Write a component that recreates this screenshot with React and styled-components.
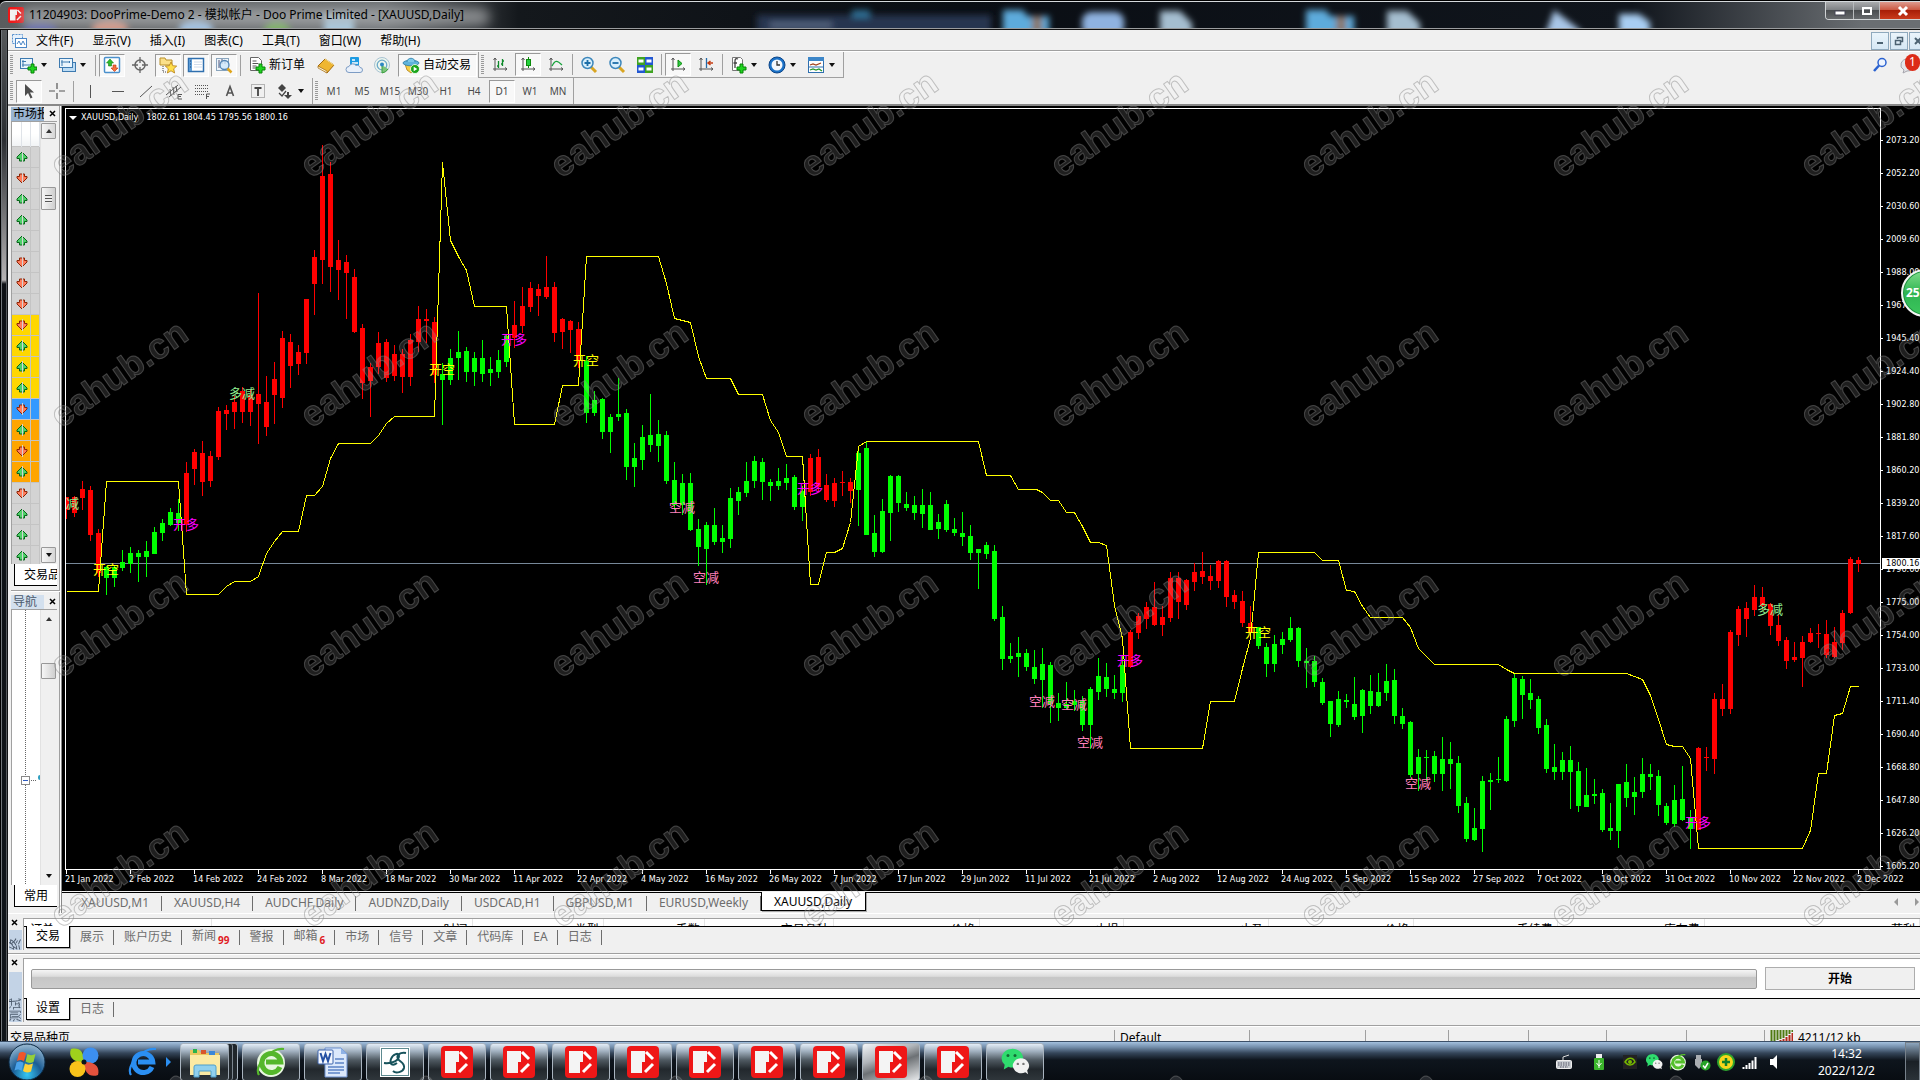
import React from 'react';
import styled, { createGlobalStyle, css } from 'styled-components';

const UI_FONT = '"Noto Sans", "Noto Sans CJK SC", sans-serif';
const AXIS_FONT = '"DejaVu Sans Condensed", "Noto Sans", sans-serif';

/* ---------- data ---------- */

// plot origin, every chart coordinate below is counted from the window corner
const LEFT = 66;
const TOP = 109;
const STEP = 8;

// [high, body top, body bottom, low]
const RUNS = [
    { color: '#ff0000', bars: [
        [497,497,510,519],[496,497,513,517],[481,489,498,510],[486,490,535,541],[529,533,573,577],
    ] },
    { color: '#00ff00', bars: [
        [566,567,578,595],[566,567,578,587],[550,562,568,571],[547,553,564,573],[550,553,557,582],
        [541,551,557,577],[527,532,554,554],[519,523,533,541],[508,512,525,526],[499,513,523,531],
    ] },
    { color: '#ff0000', bars: [
        [462,473,524,532],[449,452,469,485],[441,453,482,496],[451,456,481,487],[407,411,457,460],
        [405,410,414,430],[396,402,412,429],[387,391,412,423],[390,395,412,426],[293,394,404,444],
        [376,402,427,436],[362,379,395,424],[331,338,398,408],[334,342,366,388],[345,352,364,375],
        [299,299,353,364],[250,257,284,315],[145,176,260,284],[162,174,267,292],[240,260,270,300],
        [255,262,273,319],[269,277,332,333],[324,328,383,399],[363,367,381,417],[332,343,367,374],
        [339,342,378,382],[345,354,376,381],[349,354,377,393],[334,340,377,386],[306,319,342,352],
        [309,319,321,343],[317,322,375,383],
    ] },
    { color: '#00ff00', bars: [
        [363,374,380,425],[349,358,380,385],[331,352,358,380],[347,351,372,382],[352,358,372,386],
        [340,358,374,382],[357,369,373,386],[350,360,372,378],[334,336,362,367],
    ] },
    { color: '#ff0000', bars: [
        [301,325,338,348],[287,306,326,333],[282,288,307,312],[284,289,296,316],[256,287,297,299],
        [282,287,333,342],[318,319,332,349],[320,321,330,353],[322,329,360,368],
    ] },
    { color: '#00ff00', bars: [
        [356,361,413,423],[391,400,413,416],[398,399,432,439],[414,417,432,453],[378,414,417,421],
        [409,413,467,480],[443,458,467,487],[425,437,460,470],[394,435,445,452],[420,434,446,462],
        [431,435,481,484],[462,480,505,510],[474,483,505,515],[473,483,530,531],[519,529,547,566],
        [522,525,549,585],[508,525,542,545],[525,538,542,553],[488,498,539,548],[487,492,501,515],
        [462,481,493,497],[456,461,481,488],[458,462,482,500],[479,482,486,501],[468,481,486,490],
        [464,478,483,490],[475,477,507,510],[486,491,507,521],
    ] },
    { color: '#ff0000', bars: [
        [454,458,492,496],[449,457,487,492],[474,485,500,502],[478,483,501,507],[471,482,483,496],
        [478,482,491,503],
    ] },
    { color: '#00ff00', bars: [
        [451,453,490,526],[442,448,535,535],[515,533,552,557],[499,511,552,553],[475,476,513,541],
        [475,476,503,512],[492,504,508,511],[496,505,513,520],[489,505,514,528],[492,505,530,530],
        [514,522,529,539],[500,504,530,532],[518,529,533,536],[512,533,537,546],[525,536,553,560],
        [549,549,553,589],[542,545,554,559],[545,551,619,621],[606,617,659,670],[643,656,659,663],
        [637,653,657,677],[649,653,667,671],[650,667,679,684],[648,664,680,708],[662,665,704,723],
        [693,703,708,721],[682,704,708,709],[690,701,705,711],[696,701,725,731],[687,689,725,749],
        [658,676,692,700],[663,677,689,697],[675,689,693,699],[656,665,693,702],
    ] },
    { color: '#ff0000', bars: [
        [630,632,667,668],[613,616,633,639],[602,607,619,629],[582,607,625,626],[606,617,625,636],
        [572,578,618,622],[572,578,602,619],[579,580,605,610],[563,572,582,591],[552,571,577,584],
        [565,576,581,590],[560,561,581,588],[560,561,597,607],[590,595,602,609],[591,601,623,627],
        [606,623,633,637],
    ] },
    { color: '#00ff00', bars: [
        [627,627,646,649],[643,647,664,677],[635,644,664,672],[632,639,645,654],[617,628,640,642],
        [627,628,661,667],[648,661,663,688],[656,661,682,687],[678,682,703,705],[701,701,724,737],
        [691,699,725,727],[694,700,702,708],[677,704,717,720],[689,690,716,733],[675,691,706,714],
        [673,692,706,707],[664,681,693,701],[669,680,716,724],[708,716,724,729],[721,722,775,777],
        [749,757,774,791],[750,757,758,781],[751,756,774,782],[737,759,774,791],[742,759,764,789],
        [756,763,806,813],[797,803,839,842],[808,828,840,841],[776,781,829,852],[773,780,782,810],
        [757,779,780,783],[716,719,781,782],[674,678,721,727],[676,679,695,719],[679,693,700,709],
        [696,699,728,734],[719,725,769,773],[744,767,772,780],[752,760,772,780],[746,760,772,809],
        [762,771,806,812],[768,795,807,807],[779,794,796,804],[789,793,830,832],[803,828,831,840],
        [784,784,831,848],[764,782,798,807],[777,792,797,815],[758,774,792,798],[764,774,777,790],
        [770,776,805,816],[803,806,823,825],[785,800,824,827],[766,799,820,821],[810,817,829,849],
    ] },
    { color: '#ff0000', bars: [
        [747,748,830,830],[747,757,758,771],[693,699,759,774],[684,699,709,716],[630,632,709,714],
        [606,609,635,646],[602,608,619,637],[585,597,610,616],[587,597,606,610],[603,604,626,635],
        [614,625,641,646],[637,640,661,669],[642,657,660,662],[636,642,658,687],[628,633,642,643],
        [624,633,634,648],[620,634,655,658],[627,642,657,658],[610,613,643,650],[557,559,613,614],
        [557,560,564,572],
    ] },
];
const CANDLES = RUNS.flatMap(({ color, bars }) => bars.map((bar) => ({ color, bar })));

const STOP_LINE =
    '66,591 98,591 106,481 178,481 186,594 218,594 226,586 234,581 250,581 258,576 266,553 274,541 ' +
    '282,531 298,531 306,495 314,495 322,486 330,458 338,443 370,443 378,435 386,423 394,416 434,416 ' +
    '442,162 450,240 458,256 466,270 474,306 506,306 514,424 554,424 562,385 578,385 586,256 658,256 ' +
    '666,283 674,318 690,322 698,356 706,378 730,378 738,394 762,394 770,420 778,432 786,456 802,456 ' +
    '810,584 818,584 826,552 834,552 842,548 850,522 858,446 866,441 978,441 986,475 1010,475 1018,489 ' +
    '1036,489 1042,492 1050,500 1058,500 1066,512 1074,512 1082,526 1090,542 1098,542 1106,545 1114,605 ' +
    '1122,638 1130,748 1202,748 1210,701 1234,701 1242,668 1250,638 1258,552 1314,552 1322,560 1338,560 ' +
    '1346,590 1354,591 1362,606 1370,617 1402,617 1410,627 1418,648 1434,664 1498,664 1506,669 1514,673 ' +
    '1626,673 1642,679 1650,695 1658,719 1666,744 1674,746 1682,746 1690,758 1698,848 1802,848 1810,830 ' +
    '1818,773 1826,773 1834,715 1842,713 1850,686 1858,686';

const SIGNAL = { 开空: '#ffff00', 开多: '#ff00ff', 空减: '#ff80bb', 多减: '#90ee90' };
const SIGNALS = [
    ['多减', 53, 504], ['开空', 93, 570], ['开多', 173, 525], ['多减', 229, 394], ['开空', 429, 370],
    ['开多', 501, 340], ['开空', 573, 361], ['空减', 669, 508], ['空减', 693, 578], ['开多', 797, 489],
    ['空减', 1029, 702], ['空减', 1061, 705], ['空减', 1077, 743], ['开多', 1117, 661], ['开空', 1245, 633],
    ['空减', 1405, 784], ['多减', 1757, 610], ['开多', 1685, 823],
];

const PRICES = [
    '2073.20', '2052.20', '2030.60', '2009.60', '1988.00', '1967.00', '1945.40', '1924.40', '1902.80',
    '1881.80', '1860.20', '1839.20', '1817.60', '1796.60', '1775.00', '1754.00', '1733.00', '1711.40',
    '1690.40', '1668.80', '1647.80', '1626.20', '1605.20',
];
const DATES = [
    '21 Jan', '2 Feb', '14 Feb', '24 Feb', '8 Mar', '18 Mar', '30 Mar', '11 Apr', '22 Apr', '4 May',
    '16 May', '26 May', '7 Jun', '17 Jun', '29 Jun', '11 Jul', '21 Jul', '2 Aug', '12 Aug', '24 Aug',
    '5 Sep', '15 Sep', '27 Sep', '7 Oct', '19 Oct', '31 Oct', '10 Nov', '22 Nov', '2 Dec',
];

const MENUS = ['文件(F)', '显示(V)', '插入(I)', '图表(C)', '工具(T)', '窗口(W)', '帮助(H)'];
const FRAMES = ['M1', 'M5', 'M15', 'M30', 'H1', 'H4', 'D1', 'W1', 'MN'];
const CHART_TABS = [
    'XAUUSD,M1', 'XAUUSD,H4', 'AUDCHF,Daily', 'AUDNZD,Daily', 'USDCAD,H1', 'GBPUSD,M1', 'EURUSD,Weekly',
    'XAUUSD,Daily',
];
const TERMINAL_TABS = [
    ['交易'], ['展示'], ['账户历史'], ['新闻', 99], ['警报'], ['邮箱', 6], ['市场'], ['信号'], ['文章'],
    ['代码库'], ['EA'], ['日志'],
];
const ORDER_COLUMNS = [
    ['订单', 187], ['时间', 261], ['类型', 131], ['手数', 101], ['交易品种', 129], ['价格', 146],
    ['止损', 144], ['止盈', 145], ['价格', 145], ['手续费', 144], ['库存费', 147], ['获利', 215],
];

const GREY = '#d3d3d3';
const GOLD = '#ffd700';
const ORANGE = '#ffa500';
const SYMBOLS = [
    [1, GREY], [0, GREY], [1, GREY], [1, GREY], [1, GREY], [0, GREY], [0, GREY], [0, GREY],
    [0, GOLD], [1, GOLD], [1, GOLD], [1, GOLD], [0, '#3399ff'], [1, ORANGE], [0, ORANGE], [1, ORANGE],
    [0, GREY], [1, GREY], [1, GREY], [1, GREY],
];

/* ---------- icons ---------- */

const Plus = ({ x = 9, y = 8 }) => (
    <path
        d={`M${x + 3} ${y}h3v3h3v3h-3v3h-3v-3h-3v-3h3z`}
        fill="#1fd41f"
        stroke="#078207"
    />
);
const Axes = () => <path d="M4 2v13M2 13h14M2.500 4L4 2l1.500 2M14 11.500l2 1.500-2 1.500" stroke="#555" fill="none" />;

const ICONS = {
    newChart: (
        <>
            <rect x="1.500" y="2.500" width="12" height="10" fill="#eaf5fd" stroke="#3d7ab0" />
            <path d="M4 4v7M3 9h8M3 5.500h4" stroke="#3d7ab0" />
            <Plus />
        </>
    ),
    profiles: (
        <>
            <rect x="4.500" y="6.500" width="13" height="9" fill="#bcdcf5" stroke="#3d7ab0" />
            <rect x="1.500" y="2.500" width="13" height="9" fill="#eaf5fd" stroke="#3d7ab0" />
            <path d="M4 4v6M3 6h9M11 5l1 1-1 1" stroke="#3d7ab0" fill="none" />
        </>
    ),
    market: (
        <>
            <rect x="1.500" y="1.500" width="15" height="15" rx="1" fill="#fff" stroke="#4a90cc" strokeWidth="1.500" />
            <path d="M7 3l3.500 4H8.500v3h-3V7H3.500z" fill="#2ebd2e" stroke="#148014" strokeWidth=".6" />
            <path d="M11.500 15.500L8 12h2V9h3v3h2z" fill="#f5713c" stroke="#b83210" strokeWidth=".6" />
        </>
    ),
    target: (
        <>
            <circle cx="9" cy="9" r="5" fill="none" stroke="#666" strokeWidth="1.500" />
            <path d="M9 1v6M9 11v6M1 9h6M11 9h6" stroke="#666" strokeWidth="1.300" />
        </>
    ),
    favorites: (
        <>
            <path d="M1 2h5l1 2h6v5H1z" fill="#fbe08a" stroke="#b9902a" />
            <path d="M4 10v6h4" stroke="#444" strokeDasharray="1 1" fill="none" />
            <path d="M12 6l1.700 3.700 4 .4-3 2.700.9 4.200-3.600-2.200L8.400 17l.9-4.200-3-2.700 4-.4z" fill="#ffdf4a" stroke="#b67d12" strokeWidth=".8" />
        </>
    ),
    dataWindow: (
        <>
            <rect x="1.500" y="2.500" width="15" height="13" fill="#fff" stroke="#2f6fae" strokeWidth="1.500" />
            <rect x="2" y="3" width="3" height="12" fill="#5b9bd5" />
            <path d="M7 6h8M7 8.500h8M7 11h8" stroke="#d0dcec" />
            <path d="M3 5h1M3 8h1M3 11h1" stroke="#1c3f73" />
        </>
    ),
    inspect: (
        <>
            <rect x="1.500" y="2.500" width="12" height="12" fill="#eef5fb" stroke="#8aa5bd" />
            <path d="M4 4v8M7 3v5M10 4v4" stroke="#557" />
            <circle cx="9.500" cy="9" r="4.500" fill="#cfe8fb" fillOpacity=".8" stroke="#5587b5" strokeWidth="1.300" />
            <path d="M12.500 12.500l4 4" stroke="#e0a51a" strokeWidth="2.500" />
        </>
    ),
    order: (
        <>
            <path d="M2.500 1.500h8l3 3v10h-11z" fill="#fff" stroke="#666" />
            <path d="M4.500 5h4M4.500 7.500h6M4.500 10h4M4.500 12h3" stroke="#555" />
            <Plus x={8} y={8} />
        </>
    ),
    book: (
        <>
            <path d="M1 10l7-7 9 6-7 8z" fill="#efb631" stroke="#a2690f" />
            <path d="M1 10v2l9 5v-2z" fill="#fff3cf" stroke="#a2690f" strokeWidth=".7" />
            <path d="M8 3l9 6" stroke="#ffe597" />
        </>
    ),
    cloud: (
        <>
            <rect x="5" y="1" width="9" height="10" rx="1" fill="#1d9be2" />
            <path d="M7 4h3M7 7h6" stroke="#fff" strokeWidth="1.300" />
            <path d="M4 16.500a3 3 0 010-6 4 4 0 017-1 3 3 0 014 2 2.500 2.500 0 010 5z" fill="#e9f0fa" stroke="#7d9cc4" />
        </>
    ),
    radio: (
        <>
            <circle cx="9" cy="9" r="7.500" fill="#eef6ee" stroke="#a9c3d3" />
            <circle cx="9" cy="9" r="4.800" fill="none" stroke="#6da9c9" strokeWidth="1.300" />
            <path d="M9 9v8a8 8 0 006-4" fill="#7cc47c" stroke="#3da03d" />
            <circle cx="9" cy="8.500" r="2" fill="#2d86c2" />
        </>
    ),
    robot: (
        <>
            <path d="M3 8l2 6 4 3 5-4 1-5z" fill="#f6cf45" stroke="#ad7d14" strokeWidth=".8" />
            <ellipse cx="9" cy="7" rx="8" ry="2.800" fill="#5fb3dc" stroke="#2a7ba5" strokeWidth=".8" />
            <path d="M5 6c0-5 8-5 8 0" fill="#7cc8ea" stroke="#2a7ba5" strokeWidth=".8" />
            <circle cx="13" cy="13" r="4.500" fill="#1aa51a" stroke="#fff" strokeWidth=".8" />
            <path d="M11.700 10.700v4.600l3.600-2.300z" fill="#fff" />
        </>
    ),
    bars: (
        <>
            <Axes />
            <path d="M7.500 5v7M6 10h1.500M11.500 3v7M11.500 5H13M10 8h1.500" stroke="#0e8a2b" strokeWidth="1.300" fill="none" />
        </>
    ),
    candles: (
        <>
            <Axes />
            <path d="M9.500 1v11" stroke="#0a8a0a" />
            <rect x="7.500" y="3.500" width="4" height="6" fill="#22cf3c" stroke="#0a8a0a" />
        </>
    ),
    line: (
        <>
            <Axes />
            <path d="M5 10c3-6 5-6 10-1" stroke="#17a23b" strokeWidth="1.300" fill="none" />
        </>
    ),
    zoomIn: (
        <>
            <path d="M11 11l5 5" stroke="#d9a521" strokeWidth="3" />
            <circle cx="7.500" cy="7" r="5.500" fill="#d8effc" stroke="#3d87bb" strokeWidth="1.500" />
            <path d="M4.500 7h6M7.500 4v6" stroke="#1c6ea8" strokeWidth="1.800" />
        </>
    ),
    zoomOut: (
        <>
            <path d="M11 11l5 5" stroke="#d9a521" strokeWidth="3" />
            <circle cx="7.500" cy="7" r="5.500" fill="#d8effc" stroke="#3d87bb" strokeWidth="1.500" />
            <path d="M4.500 7h6" stroke="#1c6ea8" strokeWidth="1.800" />
        </>
    ),
    tiles: (
        <>
            <rect x="1" y="1" width="8" height="8" fill="#3fa321" />
            <rect x="9" y="1" width="8" height="8" fill="#2257d2" />
            <rect x="1" y="9" width="8" height="8" fill="#2257d2" />
            <rect x="9" y="9" width="8" height="8" fill="#3fa321" />
            <path d="M2.500 5h5M10.500 5h5M2.500 13h5M10.500 13h5" stroke="#fff" strokeWidth="3" />
        </>
    ),
    autoScroll: (
        <>
            <Axes />
            <path d="M9 4v7l4-3.500z" fill="#2ecb45" stroke="#0a8a0a" />
        </>
    ),
    shift: (
        <>
            <Axes />
            <path d="M9.500 2v10" stroke="#226aa8" strokeWidth="1.300" />
            <path d="M16 7h-5M13.500 5l-2.500 2 2.500 2" stroke="#c43a10" strokeWidth="1.500" fill="none" />
        </>
    ),
    indicators: (
        <>
            <path d="M3.500 1.500h8l2 2v11h-10z" fill="#fff" stroke="#777" />
            <path d="M9 3c-2-1-3 0-3 2v7M4.500 7H8" stroke="#444" strokeWidth="1.300" fill="none" />
            <Plus x={8} y={8} />
        </>
    ),
    periods: (
        <>
            <circle cx="9" cy="9" r="8" fill="#1b72c8" stroke="#0b4487" />
            <circle cx="9" cy="9" r="5.500" fill="#f3f8fd" />
            <path d="M9 5v4h3" stroke="#333" strokeWidth="1.300" fill="none" />
        </>
    ),
    template: (
        <>
            <rect x="1.500" y="1.500" width="15" height="15" fill="#fff" stroke="#2f6fae" />
            <rect x="1" y="1" width="16" height="4" fill="#3c86c8" />
            <path d="M3 9l3-1 3 1 5-2" stroke="#a0421c" fill="none" strokeWidth="1.300" />
            <path d="M2 11h14" stroke="#2f6fae" />
            <path d="M3 14l3-1 3 1 3-1 3 2" stroke="#23962a" fill="none" strokeWidth="1.300" />
        </>
    ),
    cursor: <path d="M5 2v12l3-3 2.500 5.500 2-1L10 10.500h4z" fill="#4d4d4d" />,
    cross: <path d="M9 1v6M9 11v6M1 9h6M11 9h6" stroke="#555" strokeWidth="1.200" />,
    vline: <path d="M9.500 3v13" stroke="#555" />,
    hline: <path d="M3 9.500h12" stroke="#555" />,
    trend: <path d="M3 15L15 4" stroke="#555" />,
    channel: (
        <>
            <path d="M1 13L13 3M4 15L16 5M5 7l1 7M8 5l1 8M11 4l1 6" stroke="#555" />
            <path d="M17 12.500h-4v4.500h4M13 14.500h3" stroke="#555" fill="none" />
        </>
    ),
    fibo: (
        <>
            <path d="M2 3.500h14M2 6.500h14M2 9.500h14M2 12.500h9" stroke="#555" strokeDasharray="1 1" />
            <path d="M13.500 17v-5H17M13.500 14.500H16" stroke="#555" fill="none" />
        </>
    ),
    letter: <path d="M5.500 14L9 4.500l3.500 9.500M6.800 11h4.400" stroke="#555" strokeWidth="1.600" fill="none" />,
    label: (
        <>
            <rect x="2.500" y="2.500" width="13" height="13" fill="none" stroke="#777" strokeDasharray="1 1" />
            <path d="M5.500 6h7M9 6v8" stroke="#444" strokeWidth="1.800" />
        </>
    ),
    shapes: (
        <>
            <path d="M6 2l4 4-4 4-4-4zM13 10v3h3l-4 4-4-4h3v-3z" fill="#444" />
            <path d="M3 11l3 3 4-5" stroke="#444" strokeWidth="1.300" fill="none" />
        </>
    ),
};

const Icon = ({ name }) => (
    <svg width="18" height="18" viewBox="0 0 18 18" aria-hidden="true">
        {ICONS[name]}
    </svg>
);

const BrandLogo = ({ size }) => (
    <svg width={size} height={size} viewBox="0 0 32 32" aria-hidden="true">
        <rect width="32" height="32" rx="4" fill="#ee1717" />
        <path d="M4 5h14v11h-3v11H4z" fill="#f4f4f4" />
        <path d="M19 6l7 7M18 26l8-8" stroke="#fff" strokeWidth="3" />
    </svg>
);

const BrowserLogo = ({ size, color, light }) => (
    <svg width={size} height={size} viewBox="0 0 32 32" aria-hidden="true">
        {light && <circle cx="16" cy="17" r="14" fill="#e8f7e0" />}
        <path d="M25 21a9.500 9.500 0 11.800-5H11" fill="none" stroke={color} strokeWidth="5" />
        <path d="M4 29C-2 20 16 1 29 3" fill="none" stroke={color} strokeWidth="2.200" />
    </svg>
);

const WeChatLogo = ({ size }) => (
    <svg width={size} height={size} viewBox="0 0 32 32" aria-hidden="true">
        <path d="M12 2a11 10 0 00-7 17l-1 5 5-3a11 10 0 103-19z" fill="#2fdc6e" />
        <circle cx="8.500" cy="9" r="1.600" fill="#126b35" />
        <circle cx="16" cy="9" r="1.600" fill="#126b35" />
        <path d="M22 12a9 8 0 105 15l3 2-1-4a9 8 0 00-7-13z" fill="#f1f1f1" />
        <circle cx="19" cy="18" r="1.300" fill="#777" />
        <circle cx="25" cy="18" r="1.300" fill="#777" />
    </svg>
);

const FolderLogo = () => (
    <svg width="32" height="32" viewBox="0 0 32 32" aria-hidden="true">
        <path d="M1 4h9l2 3h18v22H1z" fill="#e9c75f" />
        <path d="M4 3h4v4H4z" fill="#29b34c" />
        <path d="M12 4h5v4h-5z" fill="#d9552a" />
        <path d="M20 5h6v4h-6z" fill="#3b87d8" />
        <path d="M1 9h30v20H1z" fill="#fbeaa3" />
        <path d="M5 31V21q0-2 2-2h18q2 0 2 2v10h-5v-6H10v6z" fill="#8fd0ee" stroke="#4f9fc9" />
    </svg>
);

const WordLogo = () => (
    <svg width="32" height="32" viewBox="0 0 32 32" aria-hidden="true">
        <path d="M8 2h16l6 6v23H8z" fill="#dbe8fb" stroke="#6a8fcf" />
        <path d="M24 2v6h6z" fill="#8fb2e6" />
        <path d="M18 13h9M18 17h9M11 21h16M11 24h16M11 27h12" stroke="#5c83c6" strokeWidth="1.500" />
        <rect x="1" y="4" width="15" height="14" rx="1" fill="#f3f7fe" stroke="#3b63ad" />
        <path d="M3.500 7l2.500 8 2.500-7 2.500 7 2.500-8" fill="none" stroke="#2450a4" strokeWidth="2" />
    </svg>
);

const ScriptLogo = () => (
    <svg width="32" height="32" viewBox="0 0 32 32" aria-hidden="true">
        <rect x="1" y="1" width="30" height="30" fill="#fff" />
        <rect x="2.500" y="2.500" width="27" height="27" fill="none" stroke="#5d8a90" />
        <path
            d="M5 17c9 1 15-3 15-7 0-4-6-2-8 3-2 6 2 7 6 4M27 7c-6-1-10 2-8 6 2 3 7 4 6 9-1 4-8 6-11 3"
            fill="none"
            stroke="#17525b"
            strokeWidth="2"
        />
    </svg>
);

const PetalLogo = () => (
    <svg width="32" height="32" viewBox="0 0 32 32" aria-hidden="true">
        <path d="M3 3c8-2 13 2 13 13C5 17 0 10 3 3z" fill="#9fd11c" />
        <circle cx="22.500" cy="9.500" r="8" fill="#3c8ff0" />
        <path d="M16 16c12-1 16 6 14 13-8 3-14-2-14-13z" fill="#e4523d" />
        <circle cx="9.500" cy="23" r="8" fill="#f9c21a" />
        <circle cx="16" cy="16" r="2.500" fill="#0c151d" />
    </svg>
);

const StartLogo = () => (
    <svg width="38" height="38" viewBox="0 0 38 38" aria-hidden="true">
        <defs>
            <radialGradient id="orb" cx="50%" cy="85%" r="80%">
                <stop offset="0" stopColor="#35c8f5" />
                <stop offset=".5" stopColor="#1b5d95" />
                <stop offset="1" stopColor="#8fb1cc" />
            </radialGradient>
        </defs>
        <circle cx="19" cy="19" r="18" fill="url(#orb)" stroke="#0b2a45" />
        <path d="M11 10c3-1.500 5-1 7 .5l-2 8c-2-1.500-4-2-7-.5z" fill="#f0562b" />
        <path d="M19.500 11c2 1.500 5 1.500 8 0l-2 8c-3 1.500-6 1-8-.5z" fill="#95cf3a" />
        <path d="M8.500 19.500c3-1.500 5-1 7 .5l-2 8c-2-1.500-4-2-7-.5z" fill="#4ba3ea" />
        <path d="M17 20.500c2 1.500 5 1.500 8 0l-2 8c-3 1.500-6 1-8-.5z" fill="#fdd139" />
    </svg>
);

const TRAY = {
    键盘: (
        <>
            <path d="M8 7V4l6-2" stroke="#ddd" fill="none" />
            <rect x="1.500" y="7.500" width="15" height="8" rx="1" fill="#c9ced3" stroke="#eee" />
            <path d="M3 10h12M3 12h12M5 14h8" stroke="#556" strokeDasharray="1.500 1" />
        </>
    ),
    USB: (
        <>
            <rect x="6" y="1" width="6" height="4" fill="#eee" />
            <rect x="4" y="5" width="10" height="12" rx="1" fill="#3bb52c" />
            <path d="M9 7v8M6.500 10l2.500 3 2.500-3" stroke="#fff" fill="none" />
        </>
    ),
    NVIDIA: (
        <>
            <rect x="2" y="2" width="14" height="14" fill="#222" />
            <path d="M4 9c3-5 8-5 10 0-3 4-7 4-10 0z" fill="none" stroke="#76b900" strokeWidth="1.500" />
            <circle cx="9" cy="9" r="2" fill="#76b900" />
        </>
    ),
    安全删除: (
        <>
            <path d="M3 2h5v4h1v6l-3 4-4-4V6h1z" fill="#a9adb1" />
            <circle cx="12.500" cy="12.500" r="5" fill="#27a327" />
            <path d="M10 12.500l2 2.500 3-5" stroke="#fff" strokeWidth="1.500" fill="none" />
        </>
    ),
    卫士: (
        <>
            <circle cx="9" cy="9" r="8" fill="#f7d61b" stroke="#2ea32e" strokeWidth="2" />
            <path d="M9 5v8M5 9h8" stroke="#11802b" strokeWidth="2.500" />
        </>
    ),
    网络: <path d="M2.500 16v-2M5.500 16v-4M8.500 16v-6M11.500 16V7.500M14.500 16V4" stroke="#fff" strokeWidth="2" />,
    音量: <path d="M5 6h3l4-4v14l-4-4H5z" fill="#fff" />,
};

const Close = () => (
    <svg width="7" height="7" viewBox="0 0 7 7" aria-hidden="true">
        <path d="M1 1l5 5M6 1L1 6" stroke="#000" strokeWidth="1.500" />
    </svg>
);

/* ---------- pieces ---------- */

const Tool = ({ name, label, on }) => (
    <ToolButton type="button" aria-label={label || name} $on={on}>
        <Icon name={name} />
    </ToolButton>
);

const DropTool = ({ name }) => (
    <DropButton type="button" aria-label={name}>
        <Icon name={name} />
        <Caret />
    </DropButton>
);

const TitleBlobs = () => (
    <Blobs aria-hidden="true">
        <defs>
            <filter id="soft" x="-20%" y="-50%" width="140%" height="200%">
                <feGaussianBlur stdDeviation="3" />
            </filter>
            <filter id="glow" x="-10%" y="-80%" width="120%" height="260%">
                <feGaussianBlur stdDeviation="6" />
            </filter>
        </defs>
        <g filter="url(#soft)">
            <ellipse cx="40" cy="27" rx="17" ry="7" fill="#5a62a8" />
            <ellipse cx="110" cy="26" rx="18" ry="9" fill="#d8907c" />
            <ellipse cx="196" cy="27" rx="17" ry="10" fill="#9cc4ec" />
            <ellipse cx="277" cy="28" rx="13" ry="9" fill="#6fae52" />
            <rect x="324" y="12" width="30" height="22" fill="#a6cde6" />
            <rect x="757" y="13" width="234" height="20" fill="#26364f" />
            <rect x="770" y="20" width="62" height="6" fill="#53647e" />
            <rect x="852" y="8" width="18" height="8" fill="#2f6d93" />
            <path d="M1003 8h20l4 6h22v20h-46z" fill="#5dabdc" />
            <rect x="1032" y="14" width="10" height="20" fill="#8a7668" />
            <rect x="1082" y="10" width="42" height="24" rx="9" fill="#8fb2e0" />
            <path d="M1160 9h20l12 12v12h-32z" fill="#a5bed0" />
            <path d="M1306 8h20l4 6h24v20h-48z" fill="#5dabdc" />
            <rect x="1336" y="14" width="10" height="20" fill="#8a7668" />
            <path d="M1387 9h20l13 12v12h-33z" fill="#a5bed0" />
            <path d="M1554 8l26 20v8h-36z" fill="#a8c6e8" />
            <path d="M1619 12h20l11 8v14h-31z" fill="#a8cdf2" />
        </g>
        <rect x="20" y="6" width="470" height="18" rx="9" fill="#b4b7b9" fillOpacity=".65" filter="url(#glow)" />
    </Blobs>
);

const PriceChart = () => (
    <Plot>
        <ChartCaption>
            <CaptionCaret />
            <span>XAUUSD,Daily</span>
            <span>1802.61 1804.45 1795.56 1800.16</span>
        </ChartCaption>
        <svg width="100%" height="760" aria-label="XAUUSD,Daily">
            <g transform={`translate(${-LEFT} ${-TOP})`} shapeRendering="crispEdges">
                <path d="M66 563.500H1900" stroke="#778899" />
                {CANDLES.map(({ color, bar: [high, top, bottom, low] }, i) => {
                    const x = LEFT + i * STEP;
                    return (
                        <g key={i} fill={color}>
                            <rect x={x} y={high} width="1" height={Math.max(1, low - high)} />
                            <rect x={x - 2} y={top} width="5" height={bottom - top} />
                        </g>
                    );
                })}
                <polyline points={STOP_LINE} fill="none" stroke="#ffff00" transform="translate(.5 .5)" />
                {SIGNALS.map(([text, x, y]) => (
                    <SignalText key={`${x}-${y}`} x={x} y={y + 4} fill={SIGNAL[text]}>{text}</SignalText>
                ))}
            </g>
        </svg>
    </Plot>
);

const MarketWatch = () => (
    <MarketPanel>
        <PanelHead $active>
            <span>市场报价</span>
            <CloseButton type="button" aria-label="关闭"><Close /></CloseButton>
        </PanelHead>
        <PanelBody>
            <SymbolTable>
                <thead>
                    <tr><th aria-label="方向" /><th /><th /></tr>
                </thead>
                <tbody>
                    {SYMBOLS.map(([up, color], i) => (
                        <SymbolRow key={i} $color={color}>
                            <td colSpan="2">
                                <svg width="12" height="12" viewBox="0 0 12 12" aria-hidden="true">
                                    <path
                                        d="M6 1l5 5v1.500H8.500V10h-5V7.500H1V6z"
                                        transform={up ? undefined : 'rotate(180 6 6)'}
                                        fill={up ? '#4fd06a' : '#ff7d5c'}
                                        stroke={up ? '#066418' : '#8c2406'}
                                    />
                                    <path d="M6.500 0v12" stroke={GREY} />
                                </svg>
                            </td>
                            <td />
                        </SymbolRow>
                    ))}
                </tbody>
            </SymbolTable>
            <Scroll>
                <ScrollButton type="button" aria-label="向上"><Caret $up /></ScrollButton>
                <Thumb $top={65} $size={23} $grip />
                <ScrollButton type="button" aria-label="向下"><Caret /></ScrollButton>
            </Scroll>
        </PanelBody>
        <SideTab type="button">交易品种</SideTab>
    </MarketPanel>
);

const Navigator = () => (
    <NavPanel>
        <PanelHead>
            <span>导航</span>
            <CloseButton type="button" aria-label="关闭"><Close /></CloseButton>
        </PanelHead>
        <PanelBody $grow>
            <Tree>
                <TreeLine $grow={5} />
                <TreeNode type="button" aria-label="折叠" />
                <TreeLine $grow={3} />
            </Tree>
            <Scroll>
                <ScrollButton type="button" aria-label="向上" $flat><Caret $up /></ScrollButton>
                <Thumb $top={53} $size={16} />
                <ScrollButton type="button" aria-label="向下" $flat><Caret /></ScrollButton>
            </Scroll>
        </PanelBody>
        <SideTab type="button">常用</SideTab>
    </NavPanel>
);

const Tabs = ({ items, active }) => (
    <TabRow>
        {items.map(([text, count], i) => (
            <Tab key={text} type="button" $on={i === active}>
                {text}
                {count && <Count>{count}</Count>}
            </Tab>
        ))}
    </TabRow>
);

const Terminal = () => (
    <Dock $top={4}>
        <DockRail $space={3}>
            <CloseButton type="button" aria-label="关闭"><Close /></CloseButton>
            <RailLabel $size={20}>终端</RailLabel>
        </DockRail>
        <DockBody>
            <OrderHead>
                <OrderTable>
                    <thead>
                        <tr>
                            {ORDER_COLUMNS.map(([text, width], i) => (
                                <OrderCell key={i} $width={width}>{text}</OrderCell>
                            ))}
                        </tr>
                    </thead>
                </OrderTable>
            </OrderHead>
            <Tabs items={TERMINAL_TABS} active={0} />
        </DockBody>
    </Dock>
);

const Tester = () => (
    <Dock $top={3}>
        <DockRail $space={5}>
            <CloseButton type="button" aria-label="关闭"><Close /></CloseButton>
            <RailLabel $size={50}>测试</RailLabel>
        </DockRail>
        <DockBody>
            <TesterRow>
                <Progress role="progressbar" aria-label="测试进度" />
                <RunButton type="button">开始</RunButton>
            </TesterRow>
            <Tabs items={[['设置'], ['日志']]} active={0} />
        </DockBody>
    </Dock>
);

const TaskBar = () => (
    <Bar>
        <Quick $width={54} type="button" aria-label="开始"><StartLogo /></Quick>
        <Quick $width={60} type="button" aria-label="启动"><PetalLogo /></Quick>
        <Quick $width={58} type="button" aria-label="Internet Explorer">
            <BrowserLogo size={32} color="#2b8ff2" />
        </Quick>
        <QuickArrow />
        <Task type="button" aria-label="资源管理器" $stack><FolderLogo /></Task>
        <Task type="button" aria-label="浏览器"><BrowserLogo size={32} color="#55b72b" light /></Task>
        <Task type="button" aria-label="Word"><WordLogo /></Task>
        <Task type="button" aria-label="脚本"><ScriptLogo /></Task>
        {Array.from({ length: 9 }, (_, i) => (
            <Task key={i} type="button" aria-label={`DooPrime ${i + 1}`} $on={i === 7}>
                <BrandLogo size={32} />
            </Task>
        ))}
        <Task type="button" aria-label="微信"><WeChatLogo size={30} /></Task>
        <Tray>
            {['键盘', 'USB', 'NVIDIA'].map((name) => (
                <svg key={name} width="18" height="18" viewBox="0 0 18 18" aria-label={name}>{TRAY[name]}</svg>
            ))}
            <WeChatLogo size={18} />
            <BrowserLogo size={18} color="#55c02b" light />
            {['安全删除', '卫士', '网络', '音量'].map((name) => (
                <svg key={name} width="18" height="18" viewBox="0 0 18 18" aria-label={name}>{TRAY[name]}</svg>
            ))}
        </Tray>
        <Clock>
            <span>14:32</span>
            <span>2022/12/2</span>
        </Clock>
        <ShowDesktop type="button" aria-label="显示桌面" />
    </Bar>
);

const Watermark = () => (
    <WatermarkLayer aria-hidden="true">
        <defs>
            <pattern id="mark" x="40" y="50" width="250" height="250" patternUnits="userSpaceOnUse">
                <MarkText transform="translate(21 129) rotate(-35)">eahub.cn</MarkText>
            </pattern>
        </defs>
        <rect width="100%" height="100%" fill="url(#mark)" />
    </WatermarkLayer>
);

const App = () => (
    <Desktop>
        <GlobalStyle />
        <TitleBar>
            <TitleBlobs />
            <BrandLogo size={16} />
            <TitleText>11204903: DooPrime-Demo 2 - 模拟帐户 - Doo Prime Limited - [XAUUSD,Daily]</TitleText>
            <WindowButtons>
                <WindowButton type="button" aria-label="最小化" $width={28}>
                    <svg width="12" height="12"><rect x="1" y="6" width="10" height="4" fill="#fff" stroke="#445" /></svg>
                </WindowButton>
                <WindowButton type="button" aria-label="最大化" $width={26}>
                    <svg width="12" height="12"><rect x="2" y="3" width="8" height="6" fill="none" stroke="#fff" strokeWidth="2" /></svg>
                </WindowButton>
                <WindowButton type="button" aria-label="关闭" $width={46} $danger>
                    <svg width="12" height="12"><path d="M2 2l8 8M10 2l-8 8" stroke="#fff" strokeWidth="3" /></svg>
                </WindowButton>
            </WindowButtons>
        </TitleBar>
        <Shell>
            <FrameEdge />
            <Client>
                <MenuBar>
                    <svg width="16" height="16" viewBox="0 0 16 16" aria-hidden="true">
                        <rect x="1.500" y="1.500" width="10" height="9" fill="#e6f1fc" stroke="#5a93cf" strokeDasharray="2 1" />
                        <rect x="4.500" y="5.500" width="11" height="9" fill="#fff" stroke="#4a86c6" />
                        <path d="M6 11l2-3 2 4 2-4 2 4" fill="none" stroke="#4a86c6" />
                    </svg>
                    {MENUS.map((text) => <MenuItem key={text} type="button">{text}</MenuItem>)}
                    <Spacer />
                    <MdiButton type="button" aria-label="最小化">
                        <svg width="10" height="10"><path d="M2 7h6" stroke="#4c6272" strokeWidth="2" /></svg>
                    </MdiButton>
                    <MdiButton type="button" aria-label="还原">
                        <svg width="10" height="10"><path d="M3.500 3V1.500h5v4H7M1.500 4.500h5v4h-5z" fill="none" stroke="#4c6272" strokeWidth="1.500" /></svg>
                    </MdiButton>
                    <MdiButton type="button" aria-label="关闭" $cut>
                        <svg width="10" height="10"><path d="M2 2l6 6M8 2L2 8" stroke="#4c6272" strokeWidth="2" /></svg>
                    </MdiButton>
                </MenuBar>
                <ToolArea>
                    <ToolRow>
                        <ToolGroup>
                            <Handle />
                            <DropTool name="newChart" />
                            <DropTool name="profiles" />
                            <Separator />
                            <Tool name="market" on />
                            <Tool name="target" />
                            <Tool name="favorites" on />
                            <Tool name="dataWindow" on />
                            <Tool name="inspect" on />
                            <Separator />
                            <TextTool type="button" $width={69}><Icon name="order" />新订单</TextTool>
                            <Tool name="book" />
                            <Tool name="cloud" />
                            <Tool name="radio" />
                            <TextTool type="button" $width={79} $on><Icon name="robot" />自动交易</TextTool>
                        </ToolGroup>
                        <ToolGroup $boxed>
                            <Handle />
                            <Tool name="bars" />
                            <Tool name="candles" on />
                            <Tool name="line" />
                            <Separator />
                            <Tool name="zoomIn" />
                            <Tool name="zoomOut" />
                            <Tool name="tiles" />
                            <Separator />
                            <Tool name="autoScroll" on />
                            <Tool name="shift" />
                            <Separator />
                            <DropTool name="indicators" />
                            <DropTool name="periods" />
                            <DropTool name="template" />
                        </ToolGroup>
                        <Spacer />
                        <Search>
                            <svg width="16" height="16" viewBox="0 0 16 16" aria-hidden="true">
                                <circle cx="10" cy="5.500" r="4" fill="#eef5ff" stroke="#2b62d0" strokeWidth="1.500" />
                                <path d="M7 8.500L2 14" stroke="#2b62d0" strokeWidth="2.500" />
                            </svg>
                        </Search>
                        <Chat>
                            <svg width="18" height="18" viewBox="0 0 18 18" aria-hidden="true">
                                <path d="M9 3a7 6 0 00-4 11l-1 3 4-2a7 6 0 101-12z" fill="#e4e4e8" stroke="#a5a5ad" />
                            </svg>
                            <ChatCount>1</ChatCount>
                        </Chat>
                    </ToolRow>
                    <ToolRow>
                        <ToolGroup>
                            <Handle />
                            <Tool name="cursor" on />
                            <Tool name="cross" />
                            <Separator />
                            <Tool name="vline" />
                            <Tool name="hline" />
                            <Tool name="trend" />
                            <Tool name="channel" />
                            <Tool name="fibo" />
                            <Tool name="letter" />
                            <Tool name="label" />
                            <DropTool name="shapes" />
                        </ToolGroup>
                        <ToolGroup>
                            <Handle />
                            {FRAMES.map((text) => (
                                <ToolButton key={text} type="button" $on={text === 'D1'}>{text}</ToolButton>
                            ))}
                        </ToolGroup>
                    </ToolRow>
                </ToolArea>
                <Workspace>
                    <Sidebar>
                        <MarketWatch />
                        <Navigator />
                    </Sidebar>
                    <ChartSide>
                        <ChartFrame>
                            <PriceChart />
                            <PriceAxis>
                                {PRICES.map((price) => <Price key={price}>{price}</Price>)}
                                <LastPrice>1800.16</LastPrice>
                            </PriceAxis>
                            <TimeAxis>
                                {DATES.map((date) => <DateCell key={date}>{date} 2022</DateCell>)}
                            </TimeAxis>
                        </ChartFrame>
                        <ChartTabs>
                            {CHART_TABS.map((text, i) => (
                                <Tab key={text} type="button" $on={i === 7}>{text}</Tab>
                            ))}
                            <Spacer />
                            <TabArrow />
                            <TabArrow $next />
                        </ChartTabs>
                    </ChartSide>
                </Workspace>
                <Terminal />
                <Tester />
                <StatusBar>
                    <StatusMain>交易品种页</StatusMain>
                    <StatusCell $width={135}>Default</StatusCell>
                    <StatusCell $width={116} />
                    <StatusCell $width={83} />
                    <StatusCell $width={80} />
                    <StatusCell $width={78} />
                    <StatusCell $width={80} />
                    <StatusCell $width={78} />
                    <StatusCell $width={156}>
                        <svg width="23" height="14" aria-hidden="true">
                            <path d="M1.500 0v12M4.500 0v12M7.500 0v10M10.500 0v9M13.500 0v8M16.500 0v6M19.500 0v4M22.500 0v2" stroke="#4f7a12" strokeWidth="2" />
                            <path d="M7.500 11v3M10.500 10v4M13.500 9v5M16.500 7v7M19.500 5v9M22.500 3v11" stroke="#b5281c" strokeWidth="2" />
                        </svg>
                        4211/12 kb
                    </StatusCell>
                </StatusBar>
            </Client>
        </Shell>
        <TaskBar />
        <Badge>25</Badge>
        <Watermark />
    </Desktop>
);

/* ---------- styles ---------- */

const GlobalStyle = createGlobalStyle`
    * {
        box-sizing: border-box;
    }
    body {
        margin: 0;
        background: #000;
        font-family: ${UI_FONT};
        font-size: 12px;
        line-height: 16px;
        color: #000;
        overflow-x: hidden;
    }
    button {
        margin: 0;
        padding: 0;
        border: 0;
        background: none;
        font: inherit;
        color: inherit;
    }
    svg {
        display: block;
        flex: none;
    }
`;

const pressed = css`
    background: #f8f8f8;
    border: 1px solid #fff;
    border-top-color: #999;
    border-left-color: #999;
`;

const Desktop = styled.div`
    position: relative;
    display: flex;
    flex-direction: column;
    min-height: 100vh;
    overflow: hidden;
`;

const TitleBar = styled.header`
    position: relative;
    display: flex;
    align-items: center;
    gap: 5px;
    height: 30px;
    padding: 0 0 0 8px;
    background: linear-gradient(90deg, #5a5c5e 0, #6b6f72 20%, #14181c 27%, #0a0e14 50%, #10151c 85%, #6a6e72 97%);
    border-top: 1px solid #000;
    border-bottom: 1px solid #111;
    box-shadow: inset 0 1px #d5d9dc, inset 0 -1px #9a9c9e;
    border-radius: 6px 0 0 0;
    overflow: hidden;
`;
const Blobs = styled.svg`
    position: absolute;
    inset: 1px 0;
    width: 100%;
    height: 26px;
`;
const TitleText = styled.span`
    position: relative;
    flex: 1;
    white-space: nowrap;
`;
const WindowButtons = styled.div`
    position: relative;
    display: flex;
    align-self: flex-start;
    margin: 1px -7px 0 0;
    border: 1px solid #cfd2d4;
    border-top: 0;
    border-radius: 0 0 0 4px;
    overflow: hidden;
`;
const WindowButton = styled.button`
    display: flex;
    align-items: center;
    justify-content: center;
    width: ${({ $width }) => $width}px;
    height: 17px;
    border-right: 1px solid #b9bcbe;
    background: ${({ $danger }) =>
        $danger
            ? 'linear-gradient(#dd9a8d 0, #cc5a44 45%, #a81e08 50%, #c93a1c 100%)'
            : 'linear-gradient(#a9abad 0, #7f8285 45%, #4a4d50 50%, #66696c 100%)'};
`;

const Shell = styled.div`
    display: flex;
    flex: 1;
`;
const FrameEdge = styled.div`
    flex: none;
    width: 8px;
    border-left: 1px solid #000;
    border-right: 1px solid #101214;
    box-shadow: inset 1px 0 #70757a, inset -1px 0 #55595d;
    background: linear-gradient(#55585a 0, #2a2d31 110px, #b5b3b4 250px, #0d1014 254px, #10151a 100%);
`;
const Client = styled.main`
    display: flex;
    flex-direction: column;
    flex: 1;
    min-width: 0;
    background: #f0f0f0;
`;

const MenuBar = styled.nav`
    display: flex;
    align-items: center;
    height: 22px;
    padding-left: 3px;
    border-bottom: 1px solid #fff;
    box-shadow: inset 0 -1px #a0a0a0;
`;
const MenuItem = styled.button`
    padding: 0 10px 0 9px;
    white-space: nowrap;
`;
const MdiButton = styled.button`
    display: flex;
    align-items: center;
    justify-content: center;
    width: 18px;
    height: 18px;
    margin-left: 1px;
    border: 1px solid #8fa9bd;
    background: linear-gradient(#eaf4fb, #d6e8f5);
    ${({ $cut }) => $cut && 'margin-right: -7px;'}
`;
const Spacer = styled.div`
    flex: 1;
`;

const ToolArea = styled.div`
    height: 54px;
    border-bottom: 2px solid #888;
`;
const ToolRow = styled.div`
    display: flex;
    height: 26px;
`;
const ToolGroup = styled.div`
    display: flex;
    align-items: center;
    padding-right: 1px;
    border-right: 1px solid #a0a0a0;
    border-bottom: ${({ $boxed }) => ($boxed ? '1px solid #a0a0a0' : '0')};
`;
const Handle = styled.div`
    width: 3px;
    height: 20px;
    margin: 0 2px;
    background: repeating-linear-gradient(#999 0, #999 1px, #f0f0f0 1px, #f0f0f0 2px);
`;
const Separator = styled.div`
    width: 1px;
    height: 21px;
    margin: 0 2px;
    background: #a0a0a0;
`;
const ToolButton = styled.button`
    display: flex;
    align-items: center;
    justify-content: center;
    width: 26px;
    height: 23px;
    margin: 0 1px;
    font-size: 10px;
    color: #4a4a4a;
    ${({ $on }) => $on && pressed}
`;
const DropButton = styled.button`
    display: flex;
    align-items: center;
    gap: 4px;
    width: 39px;
    padding-left: 4px;
`;
const Caret = styled.i`
    flex: none;
    width: 0;
    height: 0;
    border: 3px solid transparent;
    ${({ $up }) =>
        $up
            ? 'border-bottom: 4px solid #333; border-top: 0;'
            : 'border-top: 4px solid #111; border-bottom: 0;'}
`;
const TextTool = styled.button`
    display: flex;
    align-items: center;
    gap: 3px;
    width: ${({ $width }) => $width}px;
    height: 23px;
    padding-left: 5px;
    white-space: nowrap;
    ${({ $on }) => $on && css`
        margin-left: 2px;
        padding-left: 3px;
        ${pressed}
    `}
`;
const Search = styled.button.attrs({ type: 'button', 'aria-label': '搜索' })`
    width: 24px;
`;
const Chat = styled.button.attrs({ type: 'button', 'aria-label': '消息' })`
    position: relative;
    width: 24px;
    padding-left: 3px;
`;
const ChatCount = styled.span`
    position: absolute;
    top: 2px;
    right: 0;
    width: 15px;
    height: 17px;
    border-radius: 8px;
    background: #dc2b17;
    color: #fff;
`;

const Workspace = styled.div`
    display: flex;
    flex: 1;
    min-height: 806px;
`;
const Sidebar = styled.aside`
    display: flex;
    flex-direction: column;
    flex: none;
    width: 53px;
    padding-left: 3px;
    border-right: 1px solid #fff;
    box-shadow: inset -1px 0 #a0a0a0;
`;
const MarketPanel = styled.section`
    height: 485px;
    border-bottom: 1px solid #a0a0a0;
`;
const NavPanel = styled.section`
    display: flex;
    flex-direction: column;
    flex: 1;
    padding: 2px 0 6px;
    border-top: 1px solid #fff;
`;
const PanelHead = styled.div`
    display: flex;
    align-items: center;
    height: 15px;
    gap: 4px;

    span {
        width: 33px;
        height: 14px;
        padding-left: 2px;
        line-height: 14px;
        overflow: hidden;
        white-space: nowrap;
        background: ${({ $active }) => ($active ? '#99b4d1' : '#d3e0ee')};
        color: ${({ $active }) => ($active ? '#000' : '#4c5a6c')};
    }
`;
const CloseButton = styled.button`
    display: flex;
    flex: none;
    align-items: center;
    justify-content: center;
    width: 9px;
    height: 9px;
`;
const PanelBody = styled.div`
    display: flex;
    justify-content: space-between;
    width: 46px;
    height: 443px;
    overflow: hidden;
    background: #fff;
    border-top: 1px solid #a0a0a0;
    border-left: 1px solid #a0a0a0;
    ${({ $grow }) => $grow && 'height: auto; flex: 1;'}
`;
const SymbolTable = styled.table`
    width: 28px;
    table-layout: fixed;
    border-collapse: collapse;
    align-self: flex-start;

    th {
        height: 24px;
        padding: 0;
        background: linear-gradient(#fff 50%, #f1f3f5);
        border-right: 1px solid #dfe3e8;
    }
    td {
        height: 21px;
        padding: 0 0 0 4px;
        border: 1px solid #c4c4c4;
        border-left: 0;
        line-height: 0;
    }
`;
const SymbolRow = styled.tr`
    background: ${({ $color }) => $color};
`;
const Scroll = styled.div`
    position: relative;
    display: flex;
    flex-direction: column;
    justify-content: space-between;
    width: 17px;
    background: #f0f0f0;
    border-left: 1px solid #e2e2e2;
`;
const ScrollButton = styled.button`
    display: flex;
    align-items: center;
    justify-content: center;
    width: 15px;
    height: 16px;
    margin: 1px 0;
    ${({ $flat }) => !$flat && css`
        border: 1px solid #999;
        border-radius: 1px;
        background: linear-gradient(90deg, #f6f6f6, #d6d6d6);
    `}
`;
const Thumb = styled.div`
    position: absolute;
    top: ${({ $top }) => $top}px;
    left: 0;
    width: 15px;
    height: ${({ $size }) => $size}px;
    border: 1px solid #989898;
    border-radius: 1px;
    background: linear-gradient(90deg, #f6f6f6, #cfcfcf);

    &::after {
        content: '';
        display: ${({ $grip }) => ($grip ? 'block' : 'none')};
        height: 8px;
        margin: 7px 3px;
        background: repeating-linear-gradient(#555 0, #555 1px, #eee 1px, #eee 3px);
    }
`;
const SideTab = styled.button`
    display: block;
    flex: none;
    width: 43px;
    height: 22px;
    margin-left: 3px;
    padding: 0 0 0 9px;
    overflow: hidden;
    text-align: left;
    white-space: nowrap;
    background: #fff;
    border-left: 1px solid #000;
    border-bottom: 1px solid #000;
`;
const Tree = styled.div`
    display: flex;
    flex-direction: column;
    padding-left: 9px;
`;
const TreeLine = styled.div`
    flex: ${({ $grow }) => $grow};
    width: 1px;
    margin-left: 4px;
    background: repeating-linear-gradient(#666 0, #666 1px, #fff 1px, #fff 2px);
`;
const TreeNode = styled.button`
    position: relative;
    width: 9px;
    height: 9px;
    border: 1px solid #888;
    background: linear-gradient(#2f5cc0, #2f5cc0) center / 5px 1px no-repeat #fff;

    &::before {
        content: '';
        position: absolute;
        top: 3px;
        left: 9px;
        width: 5px;
        border-top: 1px dotted #666;
    }
    &::after {
        content: '';
        position: absolute;
        top: -2px;
        left: 16px;
        width: 2px;
        height: 5px;
        border-radius: 2px 0 0 2px;
        background: #2f9fc0;
    }
`;

const ChartSide = styled.section`
    display: flex;
    flex-direction: column;
    flex: 1;
    min-width: 0;
    border-left: 1px solid #888;
`;
const ChartFrame = styled.div`
    display: grid;
    grid-template-columns: 1fr 39px;
    grid-template-rows: 761px 21px;
    padding: 2px 0 1px 3px;
    background: #000;
    color: #fff;
    font-family: ${AXIS_FONT};
    font-size: 9px;
    line-height: 11px;
`;
const Plot = styled.div`
    position: relative;
    min-width: 0;
    overflow: hidden;
    border: 1px solid #fff;
    border-bottom: 0;
`;
const ChartCaption = styled.div`
    position: absolute;
    top: 3px;
    left: 3px;
    display: flex;
    align-items: center;
    gap: 8px;
`;
const CaptionCaret = styled.i`
    width: 0;
    height: 0;
    margin-right: -4px;
    border: 4px solid transparent;
    border-top-color: #fff;
    border-bottom: 0;
`;
const SignalText = styled.text`
    font-family: "Noto Sans CJK SC", sans-serif;
    font-size: 13px;
`;
const PriceAxis = styled.div`
    position: relative;
    grid-row: span 2;
    padding-top: 16px;
    height: 782px;
    overflow: hidden;
`;
const Price = styled.div`
    display: flex;
    align-items: center;
    gap: 3px;
    height: 33px;

    &::before {
        content: '';
        width: 2px;
        height: 1px;
        background: #fff;
    }
`;
const LastPrice = styled.div`
    position: absolute;
    top: 450px;
    left: 1px;
    right: 0;
    padding-left: 4px;
    background: #fff;
    color: #000;
`;
const TimeAxis = styled.div`
    display: flex;
    min-width: 0;
    border-top: 1px solid #fff;
`;
const DateCell = styled.div`
    flex: 0 0 64px;
    white-space: nowrap;

    &::before {
        content: '';
        display: block;
        width: 1px;
        height: 4px;
        margin-left: 1px;
        background: #fff;
    }
`;

const TabRow = styled.div`
    display: flex;
    padding-left: 2px;
    border-top: 1px solid #000;
    height: 24px;
`;
const Tab = styled.button`
    position: relative;
    height: 21px;
    padding: 0 10px 2px;
    white-space: nowrap;
    color: #6d6d6d;

    &::after {
        content: '';
        position: absolute;
        top: 3px;
        right: 0;
        width: 1px;
        height: 15px;
        background: #6d6d6d;
    }
    ${({ $on }) => $on && css`
        margin-top: -1px;
        height: 22px;
        padding: 0 9px 1px;
        border: 1px solid #000;
        border-top: 0;
        background: #fff;
        color: #000;
        box-shadow: 1px 1px #aaa;
        &::after {
            display: none;
        }
    `}
`;
const Count = styled.sub`
    margin-left: 2px;
    font: bold 10px/10px ${UI_FONT};
    color: #e01b24;
`;
const ChartTabs = styled(TabRow)`
    height: 21px;
    margin-top: 1px;
    padding-left: 7px;
    align-items: flex-start;

    ${Tab} {
        height: 19px;
        padding: 1px 13px 0 12px;
    }
`;
const TabArrow = styled.i`
    width: 0;
    height: 0;
    margin: 5px 1px 0 16px;
    border: 4px solid transparent;
    ${({ $next }) =>
        $next
            ? 'border-left-color: #999; border-right: 0;'
            : 'border-right-color: #999; border-left: 0;'}
`;

const Dock = styled.section`
    display: flex;
    flex: none;
    padding: ${({ $top }) => $top}px 0 3px;
    border-top: 1px solid #fff;
    border-bottom: 1px solid #a0a0a0;
`;
const DockRail = styled.div`
    display: flex;
    flex-direction: column;
    align-items: flex-start;
    gap: ${({ $space }) => $space}px;
    width: 15px;
    padding-left: 1px;

    ${CloseButton} {
        margin-left: 1px;
    }
`;
const RailLabel = styled.span`
    width: 13px;
    height: ${({ $size }) => $size}px;
    flex: none;
    overflow: hidden;
    writing-mode: vertical-rl;
    text-orientation: sideways;
    transform: rotate(180deg);
    line-height: 13px;
    background: #c3d3e6;
    color: #4c5a6c;
`;
const DockBody = styled.div`
    flex: 1;
    min-width: 0;
    border-top: 1px solid #a0a0a0;
    border-left: 1px solid #a0a0a0;
`;
const OrderHead = styled.div`
    height: 7px;
    overflow: hidden;
    background: #fff;
`;
const OrderTable = styled.table`
    table-layout: fixed;
    width: 100%;
    border-collapse: collapse;
`;
const OrderCell = styled.th`
    width: ${({ $width }) => $width}px;
    padding: 3px 4px 0 0;
    border-right: 1px solid #e5e5e5;
    font-weight: normal;
    text-align: right;
    white-space: nowrap;

    &:first-child {
        padding-left: 6px;
        text-align: left;
    }
`;
const TesterRow = styled.div`
    display: flex;
    align-items: center;
    gap: 8px;
    padding: 8px 5px 8px 7px;
    background: #fff;
`;
const Progress = styled.div`
    flex: 1;
    height: 20px;
    border: 1px solid #999;
    border-radius: 2px;
    background: linear-gradient(#f5f5f5 0, #dcdcdc 35%, #c6c6c6 42%, #cdcdcd 100%);
`;
const RunButton = styled.button`
    width: 150px;
    height: 23px;
    border: 1px solid #adadad;
    background: #f0f0f0;
    font-weight: bold;
`;

const StatusBar = styled.footer`
    display: flex;
    flex: none;
    height: 15px;
    overflow: hidden;
    border-top: 1px solid #fff;
`;
const StatusMain = styled.div`
    flex: 1;
    padding: 3px 2px;
`;
const StatusCell = styled.div`
    display: flex;
    gap: 5px;
    flex: none;
    width: ${({ $width }) => $width}px;
    height: 18px;
    margin-top: 3px;
    padding-left: 5px;
    border-left: 1px solid #a0a0a0;
    white-space: nowrap;
`;

const Bar = styled.footer`
    display: flex;
    align-items: center;
    flex: none;
    height: 40px;
    border-top: 1px solid #3c5068;
    background: linear-gradient(#a3c0de 0, #7590ad 5px, #35465a 11px, #0e151d 18px, #080c11 100%);
`;
const Quick = styled.button`
    display: flex;
    align-items: center;
    justify-content: center;
    flex: none;
    width: ${({ $width }) => $width}px;
`;
const QuickArrow = styled.i`
    width: 5px;
    height: 10px;
    margin-right: 9px;
    border: 5px solid transparent;
    border-left-color: #2b8ff2;
    border-right: 0;
    margin-left: -6px;
`;
const Task = styled.button`
    display: flex;
    align-items: center;
    justify-content: center;
    flex: none;
    width: 58px;
    height: 38px;
    margin-right: 4px;
    border: 1px solid #a9b4bf;
    border-radius: 3px;
    background: ${({ $on }) =>
        $on
            ? 'linear-gradient(160deg, #f3f6f9 0, #b0b5ba 35%, #6d7175 55%, #e6e8ea 100%)'
            : 'linear-gradient(#e3edf7 0, #a2b1c0 20%, #4e5860 45%, #22282d 70%, #2f363b 100%)'};
    ${({ $stack }) => $stack && css`
        padding-right: 8px;
        box-shadow: inset -4px 0 #20262b, inset -5px 0 #7b858f, inset -8px 0 #20262b, inset -9px 0 #9aa4ae;
    `}
`;
const Tray = styled.div`
    display: flex;
    align-items: center;
    gap: 6px;
    margin-left: auto;

    svg:first-child {
        margin-right: 11px;
    }
    svg:nth-child(2) {
        margin-right: 7px;
    }
`;
const Clock = styled.time`
    display: flex;
    flex-direction: column;
    align-items: center;
    width: 122px;
    padding-left: 5px;
    line-height: 17px;
    color: #fff;
`;
const ShowDesktop = styled.button`
    width: 15px;
    height: 39px;
    border: 1px solid #77818b;
    background: linear-gradient(#8da5bd, #1a2026 50%, #2b3238);
`;

const Badge = styled.div`
    position: absolute;
    top: 269px;
    right: -29px;
    width: 48px;
    height: 48px;
    padding-left: 3px;
    border: 2px solid #f4f4f4;
    border-radius: 50%;
    background: linear-gradient(#7fdc8a, #2fb552 50%, #3cc65d);
    box-shadow: inset 0 0 0 1px #1f8f42;
    color: #fff;
    font-weight: bold;
    line-height: 44px;
`;

const WatermarkLayer = styled.svg`
    position: absolute;
    inset: 0;
    width: 100%;
    height: 100%;
    pointer-events: none;
`;
const MarkText = styled.text`
    font-family: "Liberation Sans", sans-serif;
    font-size: 36px;
    font-weight: bold;
    fill: rgba(255, 255, 255, 0.12);
    stroke: rgba(128, 128, 128, 0.45);
    stroke-width: 1px;
`;

export default App;
